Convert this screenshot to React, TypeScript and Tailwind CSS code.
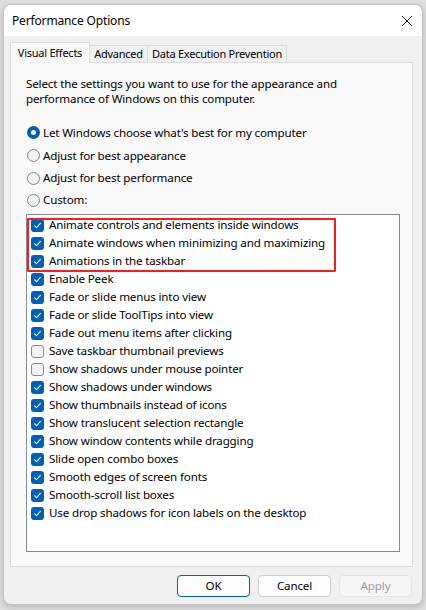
import { type FunctionComponent } from "react";

const effects: { label: string; checked: boolean }[] = [
	{ label: "Animate controls and elements inside windows", checked: true },
	{ label: "Animate windows when minimizing and maximizing", checked: true },
	{ label: "Animations in the taskbar", checked: true },
	{ label: "Enable Peek", checked: true },
	{ label: "Fade or slide menus into view", checked: true },
	{ label: "Fade or slide ToolTips into view", checked: true },
	{ label: "Fade out menu items after clicking", checked: true },
	{ label: "Save taskbar thumbnail previews", checked: false },
	{ label: "Show shadows under mouse pointer", checked: false },
	{ label: "Show shadows under windows", checked: true },
	{ label: "Show thumbnails instead of icons", checked: true },
	{ label: "Show translucent selection rectangle", checked: true },
	{ label: "Show window contents while dragging", checked: true },
	{ label: "Slide open combo boxes", checked: true },
	{ label: "Smooth edges of screen fonts", checked: true },
	{ label: "Smooth-scroll list boxes", checked: true },
	{ label: "Use drop shadows for icon labels on the desktop", checked: true }
];

const radios = [
	{ label: "Let Windows choose what's best for my computer", selected: true, height: "h-[23px]" },
	{ label: "Adjust for best appearance", selected: false, height: "h-[23px]" },
	{ label: "Adjust for best performance", selected: false, height: "h-[22px]" },
	{ label: "Custom:", selected: false, height: "h-[22px]" }
];

const Checkbox: FunctionComponent<{ checked: boolean }> = ({ checked }) => {
	if (!checked) {
		return <span className="box-border size-[13px] shrink-0 rounded-[3px] border border-[#8b8b8b] bg-[#f4f4f4]" />;
	}

	return (
		<span className="flex size-[13px] shrink-0 items-center justify-center rounded-[3px] bg-[#005fb8]">
			<svg width="9" height="9" viewBox="0 0 9 9" fill="none">
				<path d="M1.6 4.8 L3.5 6.6 L7.4 2.4" stroke="white" strokeWidth="1.1" strokeLinecap="round" strokeLinejoin="round" />
			</svg>
		</span>
	);
};

const Radio: FunctionComponent<{ selected: boolean }> = ({ selected }) => {
	if (selected) {
		return (
			<span className="flex size-[13px] shrink-0 items-center justify-center rounded-full bg-[#005fb8]">
				<span className="size-[5px] rounded-full bg-white" />
			</span>
		);
	}

	return <span className="box-border size-[13px] shrink-0 rounded-full border border-[#868686] bg-[#f3f3f3]" />;
};

export default function App() {
	return (
		<div
			className="h-[610px] w-[426px] bg-[#dedede] pt-[4px] pl-[3px] text-[11.6px] tracking-[-0.15px] text-black"
			style={{ fontFamily: '"Segoe UI", "Noto Sans", "Open Sans", sans-serif' }}
		>
			<div className="flex h-[601px] w-[420px] flex-col overflow-hidden rounded-[8px] border border-[#c4c4c4] bg-[#f0f0f0] shadow-[0_2px_6px_rgba(0,0,0,0.18)]">
				<header className="flex h-[31px] shrink-0 items-center justify-between bg-white pr-[9px] pl-[8px]">
					<span className="pt-[1px] text-[12px]">Performance Options</span>
					<svg width="12" height="12" viewBox="0 0 12 12" fill="none">
						<path d="M1 1 L11 11 M11 1 L1 11" stroke="#1a1a1a" strokeWidth="1" />
					</svg>
				</header>

				<div className="flex flex-1 flex-col pt-[6px] pr-[9px] pl-[6px]">
					<div className="flex items-end text-[11px] tracking-[-0.25px] whitespace-nowrap">
						<div className="relative z-10 -mb-px flex h-[21px] w-[80px] shrink-0 items-start justify-center border border-b-0 border-[#dcdcdc] bg-[#f9f9f9] pt-[2px]">
							Visual Effects
						</div>
						<div className="flex h-[17px] w-[58px] shrink-0 items-center justify-center border border-b-0 border-l-0 border-[#dcdcdc] bg-[#f0f0f0]">
							Advanced
						</div>
						<div className="flex h-[17px] w-[139px] shrink-0 items-center justify-center border border-b-0 border-l-0 border-[#dcdcdc] bg-[#f0f0f0]">
							Data Execution Prevention
						</div>
					</div>

					<section className="flex h-[505px] w-[403px] flex-col border border-[#dcdcdc] bg-[#f9f9f9] pt-[13px] pr-[13px] pl-[15px]">
						<p className="leading-[15px]">
							Select the settings you want to use for the appearance and
							<br />
							performance of Windows on this computer.
						</p>

						<div className="mt-[15px] flex flex-col">
							{radios.map((radio) => {
								return (
									<label key={radio.label} className={`flex ${radio.height} items-center gap-[3px] pl-px`}>
										<Radio selected={radio.selected} />
										<span>{radio.label}</span>
									</label>
								);
							})}
						</div>

						<div className="relative mt-[3px] h-[338px] w-[374px] border border-[#868a91] bg-white pt-[1px] pl-[4px]">
							{effects.map((effect) => {
								return (
									<div key={effect.label} className="flex h-[18px] items-center gap-[5px]">
										<Checkbox checked={effect.checked} />
										<span className="whitespace-nowrap">{effect.label}</span>
									</div>
								);
							})}
							<div className="absolute top-[3px] left-0 h-[54px] w-[309px] rounded-[1px] border-2 border-[#ff1a1a]" />
						</div>
					</section>

					<div className="flex justify-end gap-[8px] pt-[8px] pr-[1px]">
						<button
							type="button"
							className="h-[22px] w-[73px] rounded-[4px] border border-[#005fb8] bg-[#fdfdfd]"
						>
							OK
						</button>
						<button
							type="button"
							className="h-[22px] w-[73px] rounded-[4px] border border-[#d0d0d0] bg-[#fdfdfd]"
						>
							Cancel
						</button>
						<button
							type="button"
							disabled={true}
							className="h-[22px] w-[73px] rounded-[4px] border border-[#e5e5e5] bg-[#f5f5f5] text-[#a0a0a0]"
						>
							Apply
						</button>
					</div>
				</div>
			</div>
		</div>
	);
}
